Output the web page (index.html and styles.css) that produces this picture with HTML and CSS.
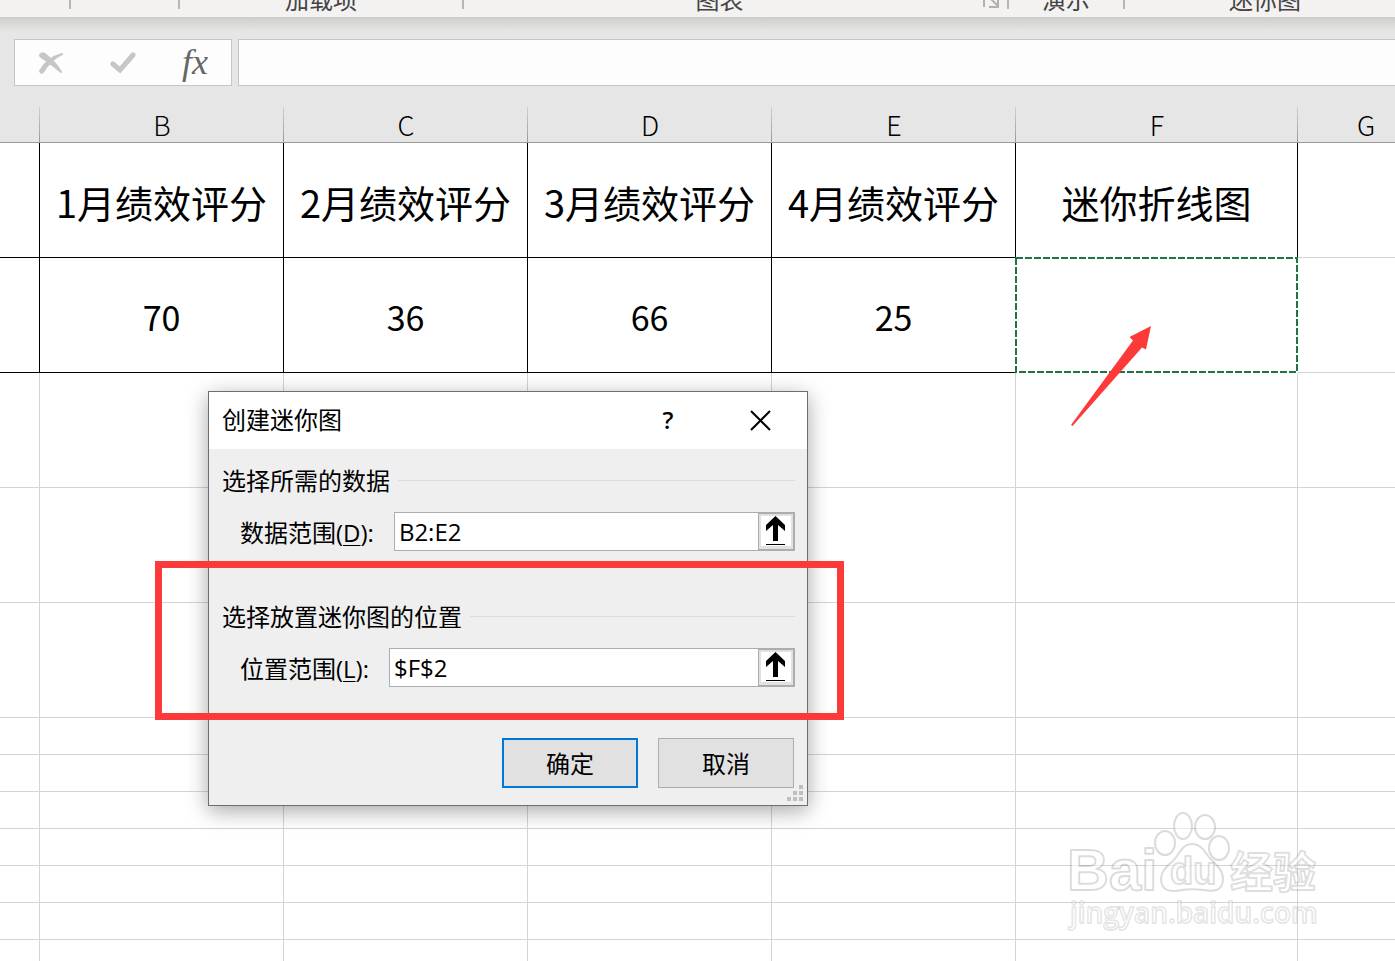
FILE: index.html
```html
<!DOCTYPE html>
<html lang="zh-CN">
<head>
<meta charset="utf-8">
<title>创建迷你图</title>
<link rel="stylesheet" href="styles.css">
</head>
<body>
<header class="ribbon">
  <div class="group group-edge"></div>
  <div class="group group-narrow"></div>
  <div class="group group-addins">加载项</div>
  <div class="group group-charts">
    <span class="group-name">图表</span>
    <svg class="launcher" width="18" height="18" viewBox="0 0 18 18" aria-hidden="true"><path d="M1 16V1H16M5 5L15 15M15 7V16H6" fill="none" stroke="#b1b1b1" stroke-width="2"/></svg>
  </div>
  <div class="group group-tours">演示</div>
  <div class="group group-spark">迷你图</div>
</header>

<section class="formula-bar">
  <div class="formula-tools">
    <button class="tool" type="button" aria-label="取消输入">
      <svg width="24" height="22" viewBox="0 0 24 22"><path d="M2 2Q4 0 7 3Q17 11 22 20Q14 13 2 5Q0 3 2 2ZM23 2Q12 7 4 20Q2 22 1 19Q8 6 23 2Z" fill="#c6c6c6" stroke="#c6c6c6" stroke-width="2" stroke-linejoin="round"/></svg>
    </button>
    <button class="tool" type="button" aria-label="输入">
      <svg width="26" height="22" viewBox="0 0 26 22"><path d="M3 12L10 18L23 3" fill="none" stroke="#c6c6c6" stroke-width="5" stroke-linecap="round"/></svg>
    </button>
    <button class="tool tool-fx" type="button" aria-label="插入函数"><i>fx</i></button>
  </div>
  <input class="formula-input" type="text" aria-label="编辑栏">
</section>

<main class="sheet">
  <table class="grid">
    <colgroup><col class="col-a"><col class="col-m"><col class="col-m"><col class="col-m"><col class="col-m"><col class="col-f"><col></colgroup>
    <thead>
      <tr><th></th><th>B</th><th>C</th><th>D</th><th>E</th><th>F</th><th>G</th></tr>
    </thead>
    <tbody>
      <tr class="tall ruled"><td></td><td>1月绩效评分</td><td>2月绩效评分</td><td>3月绩效评分</td><td>4月绩效评分</td><td>迷你折线图</td><td class="plain"></td></tr>
      <tr class="tall ruled numbers"><td></td><td>70</td><td>36</td><td>66</td><td>25</td><td class="picked"><svg class="ants" aria-hidden="true"><rect class="ants-line" x="1" y="1"/></svg></td><td class="plain"></td></tr>
      <tr class="tall"><td></td><td></td><td></td><td></td><td></td><td></td><td></td></tr>
      <tr class="tall"><td></td><td></td><td></td><td></td><td></td><td></td><td></td></tr>
      <tr class="tall"><td></td><td></td><td></td><td></td><td></td><td></td><td></td></tr>
      <tr><td></td><td></td><td></td><td></td><td></td><td></td><td></td></tr>
      <tr><td></td><td></td><td></td><td></td><td></td><td></td><td></td></tr>
      <tr><td></td><td></td><td></td><td></td><td></td><td></td><td></td></tr>
      <tr><td></td><td></td><td></td><td></td><td></td><td></td><td></td></tr>
      <tr><td></td><td></td><td></td><td></td><td></td><td></td><td></td></tr>
      <tr><td></td><td></td><td></td><td></td><td></td><td></td><td></td></tr>
      <tr><td></td><td></td><td></td><td></td><td></td><td></td><td></td></tr>
    </tbody>
  </table>
</main>

<form class="dialog" role="dialog" aria-labelledby="dialog-title">
  <div class="titlebar">
    <h1 class="title" id="dialog-title">创建迷你图</h1>
    <button class="title-button title-help" type="button" aria-label="帮助">?</button>
    <button class="title-button" type="button" aria-label="关闭">
      <svg width="22" height="22" viewBox="0 0 22 22"><path d="M2 2L21 21M21 2L2 21" stroke="#000" stroke-width="2"/></svg>
    </button>
  </div>
  <div class="dialog-body">
    <section class="part">
      <h2 class="part-title">选择所需的数据</h2>
      <div class="field">
        <label for="data-range">数据范围(<u>D</u>):</label>
        <div class="picker">
          <input class="range" id="data-range" type="text" value="B2:E2">
          <button class="pick" type="button" aria-label="选择数据范围"><svg width="30" height="30" viewBox="0 0 30 30"><path d="M14.500 0L24 9V15L17 9V25H12V9L5 15V9ZM5 28H24V29H5Z"/></svg></button>
        </div>
      </div>
    </section>
    <section class="part">
      <h2 class="part-title">选择放置迷你图的位置</h2>
      <div class="field">
        <label for="place-range">位置范围(<u>L</u>):</label>
        <div class="picker">
          <input class="range" id="place-range" type="text" value="$F$2">
          <button class="pick" type="button" aria-label="选择位置范围"><svg width="30" height="30" viewBox="0 0 30 30"><path d="M14.500 0L24 9V15L17 9V25H12V9L5 15V9ZM5 28H24V29H5Z"/></svg></button>
        </div>
      </div>
    </section>
    <div class="actions">
      <button class="action action-default" type="submit">确定</button>
      <button class="action" type="button">取消</button>
    </div>
  </div>
  <svg class="grip" width="16" height="16" viewBox="0 0 16 16" aria-hidden="true"><path d="M12 0h4v4h-4zM6 6h4v4h-4zM12 6h4v4h-4zM0 12h4v4h-4zM6 12h4v4h-4zM12 12h4v4h-4z" fill="#bfbfbf"/></svg>
</form>

<div class="highlight"></div>
<svg class="arrow" width="82" height="102" viewBox="0 0 82 102" aria-hidden="true"><path d="M81 1L59.500 12L63 15.500L1 100L2.500 101L72 22.500L76 24.500Z" fill="#fc3a39"/></svg>

<svg class="watermark" width="270" height="140" viewBox="0 0 270 140">
  <g class="wm-shape">
    <ellipse cx="45" cy="38" rx="10" ry="12"/>
    <ellipse cx="63" cy="21" rx="9" ry="13"/>
    <ellipse cx="85" cy="22" rx="10" ry="12"/>
    <ellipse cx="99" cy="43" rx="10" ry="12"/>
    <path d="M72 39C80 39 84 45 88 51C94 59 103 63 103 74C103 88 91 86 83 85C75 84 70 84 62 85C52 87 41 87 41 74C41 63 52 59 57 51C60 46 64 39 72 39Z"/>
  </g>
  <g class="wm-shape">
    <text class="wm-bai" x="-53" y="85">Bai</text>
    <text class="wm-du" x="50" y="79">du</text>
    <text class="wm-jy" x="110" y="83">经验</text>
    <text class="wm-url" x="-50" y="118">jingyan.baidu.com</text>
  </g>
</svg>
</body>
</html>
```
FILE: styles.css
```css
* { box-sizing: border-box; }

body {
  margin: 0;
  height: 100vh;
  display: flex;
  flex-direction: column;
  position: relative;
  overflow: hidden;
  background: #e6e6e6;
  color: #000;
  font-family: "Open Sans", "Noto Sans CJK SC", sans-serif;
  font-size: 24px;
}

button, input { font: inherit; color: inherit; }

button {
  display: flex;
  align-items: center;
  justify-content: center;
  padding: 0;
  border: 0;
  background: none;
}

/* Ribbon, scrolled so only its lower edge shows */
.ribbon {
  flex: none;
  display: flex;
  height: 17px;
  background: #f3f2f1;
  color: #444;
  font-family: "Noto Sans CJK SC", sans-serif;
  line-height: 36px;
}

.group {
  flex: none;
  display: flex;
  justify-content: center;
  align-items: flex-end;
  height: 17px;
  text-align: center;
  border: 0 solid #b8b7b6;
  border-width: 0 2px 0 0;
  border-image: linear-gradient(#b8b7b6 9px, transparent 9px) 1;
}

.group-edge { width: 71px; }
.group-narrow { width: 109px; }
.group-addins { width: 284px; }
.group-charts { width: 545px; }
.group-tours { width: 116px; }
.group-spark { width: 282px; }
.group-name { flex: 1; }
.launcher { margin: 0 6px 8px 8px; }

.formula-bar {
  flex: none;
  display: flex;
  gap: 6px;
  height: 90px;
  padding: 22px 0 21px 14px;
  background: linear-gradient(#cfcdcb, #e6e6e6 14px);
}

.formula-tools {
  flex: none;
  display: flex;
  width: 218px;
  border: 1px solid #c6c6c6;
  background: #fdfdfd;
}

.tool { flex: 1; }

.tool-fx {
  padding-bottom: 2px;
  color: #666;
  font-family: "Liberation Serif", serif;
  font-size: 36px;
  line-height: 36px;
}

.formula-input {
  flex: 1;
  min-width: 0;
  border: 1px solid #c6c6c6;
  border-right: 0;
  background: #fdfdfd;
}

/* Worksheet */
.sheet {
  flex: 1;
  min-height: 0;
  overflow: hidden;
  background: #fff;
}

.grid {
  width: 100%;
  min-width: 1434px;
  table-layout: fixed;
  border-collapse: separate;
  border-spacing: 0;
  font-family: "Noto Sans CJK SC", sans-serif;
}

.col-a { width: 40px; }
.col-m { width: 244px; }
.col-f { width: 282px; }

.grid th {
  height: 36px;
  padding: 1px 0 0;
  background: linear-gradient(#cfcfcf, #999) right / 1px 100% no-repeat #e6e6e6;
  border-bottom: 1px solid #999;
  font-size: 27px;
  font-weight: 300;
  line-height: 34px;
}

.grid td {
  height: 37px;
  padding: 0;
  border: 0 solid #d4d4d4;
  border-width: 0 1px 1px 0;
  text-align: center;
}

.grid .tall td {
  height: 115px;
  padding-top: 3px;
  font-size: 38px;
  line-height: 56px;
}

.grid .ruled td { border-color: #000; }
.grid .ruled .plain { border-color: #d4d4d4; }
.grid .numbers td { font-size: 34px; }
.grid .numbers .picked { position: relative; border-color: #d4d4d4; }

.ants {
  position: absolute;
  top: -1px;
  left: -1px;
  width: calc(100% + 2px);
  height: calc(100% + 2px);
  background: #fff;
}

.ants-line {
  width: calc(100% - 2px);
  height: calc(100% - 2px);
  fill: none;
  stroke: #217346;
  stroke-width: 2px;
  stroke-dasharray: 7 2;
}

/* Dialog window */
.dialog {
  position: absolute;
  left: 208px;
  top: 391px;
  width: 600px;
  border: 1px solid #6e6e6e;
  background: #efefef;
  box-shadow: 0 5px 20px rgba(0, 0, 0, 0.35);
}

.titlebar {
  display: flex;
  height: 57px;
  padding: 0 1px 2px 13px;
  background: #fff;
}

.title {
  flex: 1;
  margin: 0;
  font-size: 24px;
  font-weight: 400;
  line-height: 55px;
}

.title-button { width: 92px; }
.title-help { font-weight: 600; }

.dialog-body { padding: 15px 12px 17px 13px; }

.part { margin-bottom: 49px; }
.part:nth-child(2) { margin-bottom: 51px; }

.part-title {
  display: flex;
  align-items: center;
  gap: 8px;
  margin: 0 0 14px;
  font-size: 24px;
  font-weight: 400;
  line-height: 34px;
}

.part-title::after {
  content: "";
  flex: 1;
  height: 1px;
  margin-bottom: 1px;
  background: #dcdcdc;
}

.field {
  display: flex;
  align-items: center;
  gap: 20px;
  height: 39px;
  padding-left: 18px;
}

.field u { text-decoration-thickness: 1px; text-underline-offset: 3px; }

.picker {
  flex: 1;
  display: flex;
  min-width: 0;
  height: 39px;
}

.range {
  flex: 1;
  min-width: 0;
  padding: 0 4px;
  border: 1px solid #abadb3;
  border-right: 0;
  background: #fff;
}

.pick {
  width: 37px;
  padding-bottom: 2px;
  border: 2px solid #abadb3;
  border-left-width: 1px;
  background: #e1e1e1;
}

.pick svg { background: #fff; }

.actions {
  display: flex;
  justify-content: flex-end;
  gap: 20px;
  padding-right: 1px;
}

.action {
  width: 136px;
  height: 50px;
  padding-bottom: 2px;
  border: 1px solid #adadad;
  background: #e1e1e1;
}

.action-default { border: 2px solid #0078d7; }

.grip {
  position: absolute;
  right: 4px;
  bottom: 4px;
}

/* Annotations over the window */
.highlight {
  position: absolute;
  left: 155px;
  top: 561px;
  width: 689px;
  height: 159px;
  border: 7px solid #fc3a39;
}

.arrow {
  position: absolute;
  left: 1070px;
  top: 325px;
}

.watermark {
  position: absolute;
  left: 1120px;
  top: 805px;
  overflow: visible;
}

.wm-shape {
  fill: rgba(255, 255, 255, 0.5);
  stroke: rgba(0, 0, 0, 0.14);
  stroke-width: 2px;
  stroke-linejoin: round;
}

.wm-bai {
  font: bold 58px "Liberation Sans", sans-serif;
}

.wm-du {
  font: bold 38px "Liberation Sans", sans-serif;
}

.wm-jy {
  font: 700 43px "Noto Sans CJK SC", sans-serif;
}

.wm-url {
  font: 600 28px "Open Sans", sans-serif;
  stroke: rgba(0, 0, 0, 0.1);
}
```
